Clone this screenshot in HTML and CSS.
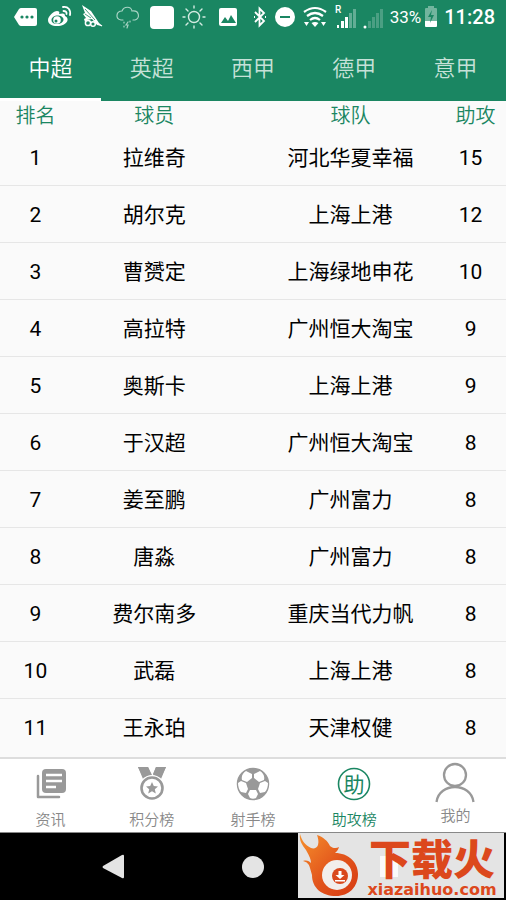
FILE: index.html
```html
<!DOCTYPE html>
<html lang="zh-CN">
<head>
  <meta charset="UTF-8">
  <meta name="viewport" content="width=device-width, initial-scale=1.0">
  <title>助攻榜</title>
  <link rel="stylesheet" href="styles.css">
</head>
<body>

<div class="status-bar">
  <div class="notifications">
    <svg width="24" height="24" viewBox="0 0 24 24"><path fill="#fff" d="M0 12l5-8q1-1 2-1h14q2 0 2 2v14q0 2-2 2H7q-1 0-2-1z"/><g fill="#1a8662"><circle cx="8" cy="12" r="1.600"/><circle cx="13" cy="12" r="1.600"/><circle cx="18" cy="12" r="1.600"/></g></svg>
    <svg width="24" height="24" viewBox="0 0 24 24"><path fill="#fff" fill-rule="evenodd" d="M0 15c0-4 6-9 9-9 2 0 3 1 2 3 4-1 6-1 6 2 5 2 3 10-8 10-5 0-9-2-9-6zm3.500 0c0 3 3 4 6 4s6-2 6-4.500-3-4-6-4-6 2-6 4.500z"/><circle cx="9" cy="15" r="3.800" fill="#fff"/><circle cx="8" cy="16" r="1.500" fill="#1a8662"/><path fill="none" stroke="#fff" stroke-width="1.800" stroke-linecap="round" d="M15 2c5-1 8 3 7 8M15.500 6c2 0 3.500 1 3 3"/></svg>
    <svg width="24" height="24" viewBox="0 0 24 24"><path fill="#fff" d="M0 0l9 6 8 12 3 3-5-1-5-6-5 1-2 2-1-3 2-1-3-4 2-1z"/><path stroke="#1a8662" stroke-width=".8" fill="none" d="M3 4l10 11M3 9l6 4"/><circle cx="6" cy="18" r="2.600" fill="#1a8662" stroke="#fff" stroke-width="1.500"/><circle cx="11" cy="19" r="2.300" fill="#1a8662" stroke="#fff" stroke-width="1.500"/><path stroke="#fff" stroke-width="1.300" fill="none" d="M13 17l7 4"/></svg>
    <svg width="24" height="24" viewBox="0 0 24 24" fill="none" stroke="#a9d4c5" stroke-width="1.200" stroke-linecap="round"><path d="M7 15H5c-6-1-5-9 1-9 2-5 9-5 10 0 8-1 8 8 3 9h-2"/><path d="M8 17v1M14 16v1M8 21v1M12 17l-2 3h2l-1 3"/></svg>
    <svg width="24" height="24" viewBox="0 0 24 24"><rect y="1" width="24" height="23" rx="4" fill="#fff"/></svg>
    <svg width="24" height="24" viewBox="0 0 24 24" fill="none" stroke="#d4ebe2" stroke-width="1.400" stroke-linecap="round"><circle cx="10" cy="12" r="5.500"/><path d="M10 1v2M10 21v2M-1 12h2M19 12h2M2 4l2 2M16 18l2 2M2 20l2-2M16 6l2-2"/></svg>
    <svg width="24" height="24" viewBox="0 0 24 24"><rect x="1" y="3" width="18" height="18" rx="2" fill="#fff"/><path fill="#1a8662" d="M3 18l4-6 3 4 3-6 5 8z"/></svg>
  </div>
  <div class="system">
    <svg width="14" height="24" viewBox="0 0 14 24" fill="none" stroke="#fff" stroke-width="1.800"><path d="M1 7l9 9-4.500 4.500v-17L10 8l-9 9"/><path d="M0 12h1M11 12h1"/></svg>
    <svg width="22" height="24" viewBox="0 0 22 24"><circle cx="11" cy="12" r="10" fill="#fff"/><path stroke="#1a8662" stroke-width="2" d="M6 12h10"/></svg>
    <svg width="24" height="24" viewBox="0 0 24 24" fill="none" stroke="#fff" stroke-width="2.200"><path d="M2 7q11-8 22 0M5 11q8-6 16 0M8 15q5-4 10 0"/><path fill="#fff" stroke="none" d="M9.500 18q3.500-2 7 0L13 22zM2 17h5l-2.500 4zM19 17h5l-2.500 4z"/></svg>
    <svg width="24" height="26" viewBox="0 0 24 26"><text x="3" y="9" class="roaming">R</text><path fill="#fff" d="M5 21h2v3H5zM9 17h3v7H9zM13 13h3v11h-3z"/><path fill="#63ad95" d="M17 9h3v15h-3zM21 5h3v19h-3z"/></svg>
    <svg width="22" height="26" viewBox="0 0 22 26"><circle cx="3" cy="23" r="1.500" fill="#fff"/><path fill="#4b9f83" d="M6 17h3v7H6zM10 13h3v11h-3zM14 9h3v15h-3zM18 5h3v19h-3z"/></svg>
    <div class="battery">
      <span>33%</span>
      <svg width="14" height="24" viewBox="0 0 14 24"><path fill="#72b59e" d="M4 1h6v2h2q1 0 1 1v12H1V4q0-1 1-1h2z"/><path fill="#fff" d="M1 16h12v5q0 1-1 1H2q-1 0-1-1z"/><path fill="#1a8662" d="M8 5l-4 7h3l-1 6 4-8H7z"/></svg>
    </div>
    <time>11:28</time>
  </div>
</div>

<nav class="leagues">
  <a href="#" class="active">中超</a>
  <a href="#">英超</a>
  <a href="#">西甲</a>
  <a href="#">德甲</a>
  <a href="#">意甲</a>
</nav>

<main>
  <table>
    <thead>
      <tr><th class="rank">排名</th><th class="player">球员</th><th class="team">球队</th><th class="assists">助攻</th></tr>
    </thead>
    <tbody>
      <tr><td>1</td><td>拉维奇</td><td class="team">河北华夏幸福</td><td>15</td></tr>
      <tr><td>2</td><td>胡尔克</td><td class="team">上海上港</td><td>12</td></tr>
      <tr><td>3</td><td>曹赟定</td><td class="team">上海绿地申花</td><td>10</td></tr>
      <tr><td>4</td><td>高拉特</td><td class="team">广州恒大淘宝</td><td>9</td></tr>
      <tr><td>5</td><td>奥斯卡</td><td class="team">上海上港</td><td>9</td></tr>
      <tr><td>6</td><td>于汉超</td><td class="team">广州恒大淘宝</td><td>8</td></tr>
      <tr><td>7</td><td>姜至鹏</td><td class="team">广州富力</td><td>8</td></tr>
      <tr><td>8</td><td>唐淼</td><td class="team">广州富力</td><td>8</td></tr>
      <tr><td>9</td><td>费尔南多</td><td class="team">重庆当代力帆</td><td>8</td></tr>
      <tr><td>10</td><td>武磊</td><td class="team">上海上港</td><td>8</td></tr>
      <tr><td>11</td><td>王永珀</td><td class="team">天津权健</td><td>8</td></tr>
    </tbody>
  </table>
</main>

<nav class="bottom-nav">
  <a href="#">
    <svg width="34" height="34" viewBox="0 0 34 34"><path fill="none" stroke="#999" stroke-width="2.500" stroke-linecap="round" stroke-linejoin="round" d="M4 9v21h21"/><rect x="8" y="2" width="24" height="24" rx="4" fill="#999"/><path stroke="#fff" stroke-width="2.500" d="M12 8h16M12 14h16M12 20h10"/></svg>
    <span>资讯</span>
  </a>
  <a href="#">
    <svg width="34" height="34" viewBox="0 0 34 34"><path fill="#999" d="M3 0h10l4 8-9 4zM21 0h10l-5 12-8-4z"/><circle cx="17" cy="21" r="13" fill="#fff"/><circle cx="17" cy="21" r="10.500" fill="none" stroke="#999" stroke-width="2.600"/><path fill="#999" d="M3 0h10l3 7-8 3zM21 0h10l-5 10-8-3z"/><path fill="#999" d="M17 15l1.800 4 4.200.4-3.200 2.800 1 4.300-3.800-2.300-3.800 2.300 1-4.300-3.200-2.800 4.200-.4z"/></svg>
    <span>积分榜</span>
  </a>
  <a href="#">
    <svg width="34" height="34" viewBox="0 0 34 34"><circle cx="17" cy="17" r="15.500" fill="#999" stroke="#999" stroke-width="1.500"/><g fill="#fff"><path d="M10 4l6 3v4l-5 4-5-2c-1-4 1-7 4-9zM24 4l-6 3v4l5 4 5-2c1-4-1-7-4-9zM2 16l3-2 5 2 2 6-2 4-5-1c-2-2-3-6-3-9zM32 16l-3-2-5 2-2 6 2 4 5-1c2-2 3-6 3-9zM14 23h6l2 4-2 4c-2 1-4 1-6 0l-2-4z"/></g></svg>
    <span>射手榜</span>
  </a>
  <a href="#" class="active">
    <svg width="34" height="34" viewBox="0 0 34 34"><circle cx="17" cy="17" r="15.500" fill="none" stroke="#1a8662" stroke-width="1.600"/><text x="17" y="25" text-anchor="middle" class="badge">助</text></svg>
    <span>助攻榜</span>
  </a>
  <a href="#" class="mine">
    <svg width="40" height="40" viewBox="0 0 40 40" fill="none" stroke="#999" stroke-width="2.300"><circle cx="20" cy="12" r="11"/><path d="M1.500 39C4 19 36 19 38.500 39"/></svg>
    <span>我的</span>
  </a>
</nav>

<div class="android-bar">
  <button aria-label="返回"><svg width="22" height="24" viewBox="0 0 22 24"><path fill="#e4e4e4" d="M1 11L20 0q2-1 2 1v21q0 2-2 1L1 13q-1-1 0-2z"/></svg></button>
  <button aria-label="主页"><svg width="22" height="22" viewBox="0 0 22 22"><circle cx="11" cy="11" r="11" fill="#e4e4e4"/></svg></button>
  <button aria-label="最近"><svg width="22" height="22" viewBox="0 0 22 22"><rect width="22" height="22" rx="2" fill="#e4e4e4"/></svg></button>
  <div class="watermark">
    <svg width="62" height="64" viewBox="0 0 62 64">
      <defs><linearGradient id="flame" x1="0" y1="0" x2="1" y2="1"><stop offset="0" stop-color="#f6902c"/><stop offset=".55" stop-color="#e2551c"/><stop offset="1" stop-color="#d63a12"/></linearGradient></defs>
      <path fill="url(#flame)" d="M2 1c2 7 5 11 11 14 3 1 6 0 7-3 1-4 0-7-1-10 6 2 11 6 13 11 2 2 6 3 9 1-1 3-2 4-4 6 13 0 23 9 23 21 0 13-9 22-22 22-14 0-24-8-24-21l-2-7c-1-4-3-6-7-7 4-1 6 0 8 2 0-5-3-9-5-13C4 12 1 7 2 1z"/>
      <circle cx="39" cy="42" r="15" fill="#f2eeec"/>
      <circle cx="42" cy="43" r="8" fill="#d9481d"/>
      <path fill="#fff" d="M40.500 38h3v4h3L42 46l-4.500-4h3zM37 47h10v1.500H37z"/>
    </svg>
    <div class="watermark-text">
      <strong>下载火</strong>
      <span>xiazaihuo.com</span>
    </div>
  </div>
</div>

</body>
</html>
```
FILE: styles.css
```css
* {
  box-sizing: border-box;
}
body {
  margin: 0;
  min-height: 100vh;
  display: flex;
  flex-direction: column;
  background-color: #fafafa;
  color: #111;
  font-family: Roboto, "Noto Sans CJK SC", sans-serif;
}
a {
  color: inherit;
  text-decoration: none;
}
svg {
  display: block;
  flex: none;
  overflow: visible;
}
.status-bar {
  display: flex;
  align-items: center;
  justify-content: space-between;
  height: 36px;
  padding: 0 11px 2px 14px;
  background-color: #1a8662;
  color: #fff;
}
.notifications {
  display: flex;
  gap: 10px;
}
.system {
  display: flex;
  align-items: center;
  gap: 6px;
}
.system time {
  font-size: 20px;
  font-weight: 500;
}
.roaming {
  font-size: 10px;
  font-weight: 500;
  fill: #fff;
}
.battery {
  display: flex;
  align-items: center;
  gap: 3px;
  font-size: 17px;
}
.leagues {
  display: flex;
  height: 65px;
  background-color: #1a8662;
  color: #c6e1d8;
  font-size: 22px;
  font-weight: 350;
}
.leagues a {
  flex: 1;
  padding-top: 3px;
  text-align: center;
  line-height: 59px;
  border-bottom: 3px solid transparent;
}
.leagues .active {
  color: #fff;
  border-color: #fff;
}
main {
  flex: 1;
}
table {
  width: 100%;
  table-layout: fixed;
  border-collapse: collapse;
  text-align: center;
}
th {
  height: 27px;
  padding: 3px 0 0;
  font-size: 20px;
  line-height: 24px;
  font-weight: 350;
  color: #1a8662;
}
td {
  height: 57px;
  padding: 3px 0 0;
  font-size: 21px;
  line-height: 24px;
  color: #000;
  border-bottom: 1px solid #e6e6e6;
}
tr:last-child td {
  border-bottom: none;
}
.rank {
  width: 14%;
}
.player {
  width: 33%;
}
.team {
  padding-left: 28px;
}
.assists {
  width: 14%;
  padding-left: 10px;
}
.bottom-nav {
  display: flex;
  height: 76px;
  border-top: 2px solid #ddd;
  border-bottom: 1px solid #888;
  background-color: #fff;
  color: #888;
  font-size: 15px;
  font-weight: 350;
}
.bottom-nav a {
  flex: 1;
  display: flex;
  flex-direction: column;
  align-items: center;
  gap: 8px;
  padding-top: 8px;
  line-height: 22px;
}
.bottom-nav .mine {
  gap: 2px;
  padding-top: 4px;
}
.bottom-nav .active {
  color: #1a8662;
}
.badge {
  font-size: 21px;
  font-weight: 400;
  fill: #1a8662;
}
.android-bar {
  position: relative;
  display: flex;
  justify-content: center;
  height: 67px;
  background-color: #000;
}
.android-bar button {
  width: 140px;
  padding: 0;
  border: none;
  background: none;
  display: flex;
  align-items: center;
  justify-content: center;
}
/* site stamp over the right end of the bar */
.watermark {
  position: absolute;
  top: 0;
  right: 2px;
  width: 206px;
  height: 65px;
  display: flex;
  background: #e4e4e4 linear-gradient(#fafafa, #fafafa) 82px 23px / 18px 21px no-repeat;
  color: #dc481c;
}
.watermark-text {
  flex: 1;
  display: flex;
  flex-direction: column;
  align-items: center;
}
.watermark strong {
  font-family: "Noto Sans CJK SC", sans-serif;
  font-size: 42px;
  line-height: 48px;
  font-weight: 900;
}
.watermark span {
  font-family: "DejaVu Sans", sans-serif;
  font-size: 16px;
  line-height: 18px;
  font-weight: 700;
}
```
